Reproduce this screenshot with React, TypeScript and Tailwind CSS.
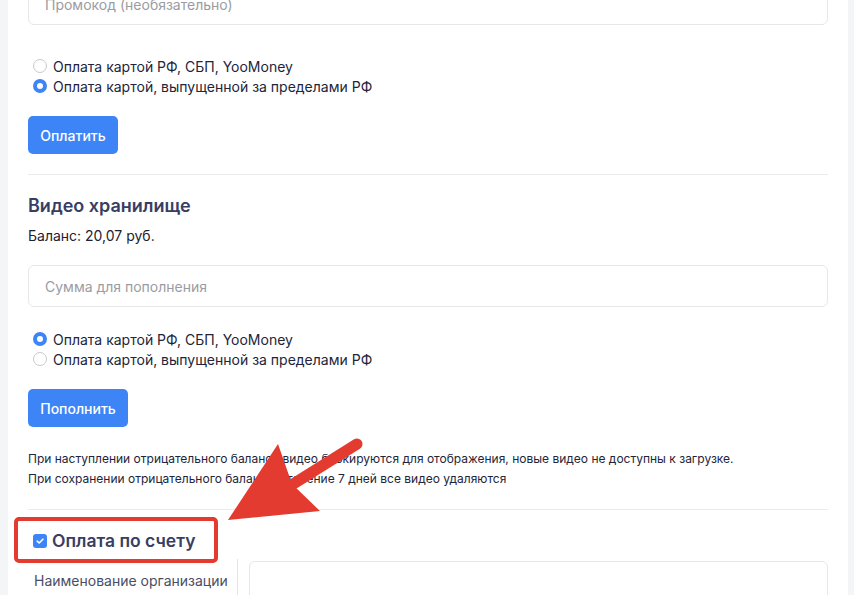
import React from 'react';

const Radio: React.FC<{ checked?: boolean; label: string }> = ({ checked, label }) => (
    <label className="flex items-center h-5 text-[14px] text-[#22253a]">
        <span
            className={`ml-[5px] w-[14px] h-[14px] rounded-full shrink-0 ${checked ? 'border-[4px] border-[#3d85f7] bg-white' : 'border border-[#c9c9c9] bg-white'}`}
        />
        <span className="ml-[6px]">{label}</span>
    </label>
);

const Button: React.FC<{ children: React.ReactNode; w: string }> = ({ children, w }) => (
    <button className={`${w} h-[38px] rounded-[5px] bg-[#3d85f7] text-white text-[14px] font-medium`}>
        {children}
    </button>
);

const App: React.FC = () => {
    return (
        <div className="relative h-[595px] overflow-hidden flex bg-[#f4f5f7]" style={{ fontFamily: 'Inter, "Noto Sans", sans-serif' }}>
            <div className="w-2 shrink-0" />
            <div className="flex-1 bg-white px-5">
                {/* Promo code */}
                <div className="-mt-[17px] h-[42px] border border-[#e6e7eb] rounded-md flex items-center px-4 text-[14px] text-[#9a9ca3]">
                    Промокод (необязательно)
                </div>

                <div className="mt-[31px] flex flex-col">
                    <Radio label="Оплата картой РФ, СБП, YooMoney" />
                    <Radio checked label="Оплата картой, выпущенной за пределами РФ" />
                </div>

                <div className="mt-5">
                    <Button w="w-[90px]">Оплатить</Button>
                </div>

                <div className="mt-5 border-t border-[#ececee]" />

                {/* Video storage */}
                <h2 className="mt-[19px] h-6 leading-6 text-[18px] font-semibold text-[#383e63]">Видео хранилище</h2>
                <p className="mt-[8px] h-5 leading-5 text-[14px] text-[#1f2130]">Баланс: 20,07 руб.</p>

                <div className="mt-[19px] h-[42px] border border-[#e6e7eb] rounded-md flex items-center px-4 text-[14px] text-[#9a9ca3]">
                    Сумма для пополнения
                </div>

                <div className="mt-[22px] flex flex-col">
                    <Radio checked label="Оплата картой РФ, СБП, YooMoney" />
                    <Radio label="Оплата картой, выпущенной за пределами РФ" />
                </div>

                <div className="mt-5">
                    <Button w="w-[100px]">Пополнить</Button>
                </div>

                <div className="mt-[22px] text-[12px] leading-5 text-[#22253a]">
                    <p>При наступлении отрицательного баланса видео блокируются для отображения, новые видео не доступны к загрузке.</p>
                    <p>При сохранении отрицательного баланса в течение 7 дней все видео удаляются</p>
                </div>

                <div className="mt-5 border-t border-[#ececee]" />

                {/* Invoice */}
                <div className="mt-[19px] flex items-center h-6">
                    <span className="ml-[5px] w-[14px] h-[14px] rounded-[3px] bg-[#3d85f7] flex items-center justify-center">
                        <svg width="10" height="10" viewBox="0 0 10 10" fill="none">
                            <path d="M2.2 5.2 L4.2 7 L7.9 3.2" stroke="white" strokeWidth="1.6" strokeLinecap="round" strokeLinejoin="round" />
                        </svg>
                    </span>
                    <span className="ml-[5px] text-[17.5px] font-semibold text-[#383e63]">Оплата по счету</span>
                </div>

                <div className="mt-[6px] flex">
                    <div className="w-[210px] shrink-0 border-r border-[#e3e4e8] pl-[6px] pt-[11px] text-[14px] text-[#4a4e63] h-[60px]">
                        Наименование организации
                    </div>
                    <div className="ml-[11px] mt-[2px] flex-1 h-[42px] border border-[#e6e7eb] rounded-md" />
                </div>
            </div>
            <div className="w-[6px] shrink-0" />

            {/* Annotation: red box */}
            <div className="absolute left-[14px] top-[517px] w-[204px] h-[46px] border-[4px] border-[#e33b2f] rounded-[5px]" />

            {/* Annotation: red arrow */}
            <svg className="absolute left-0 top-0 pointer-events-none" width="854" height="595" viewBox="0 0 854 595">
                <line x1="357" y1="444" x2="290" y2="486" stroke="#e33b2f" strokeWidth="11" strokeLinecap="round" />
                <polygon points="228,520 278,444 292,484 320,511" fill="#e33b2f" />
            </svg>
        </div>
    );
};

export default App;
